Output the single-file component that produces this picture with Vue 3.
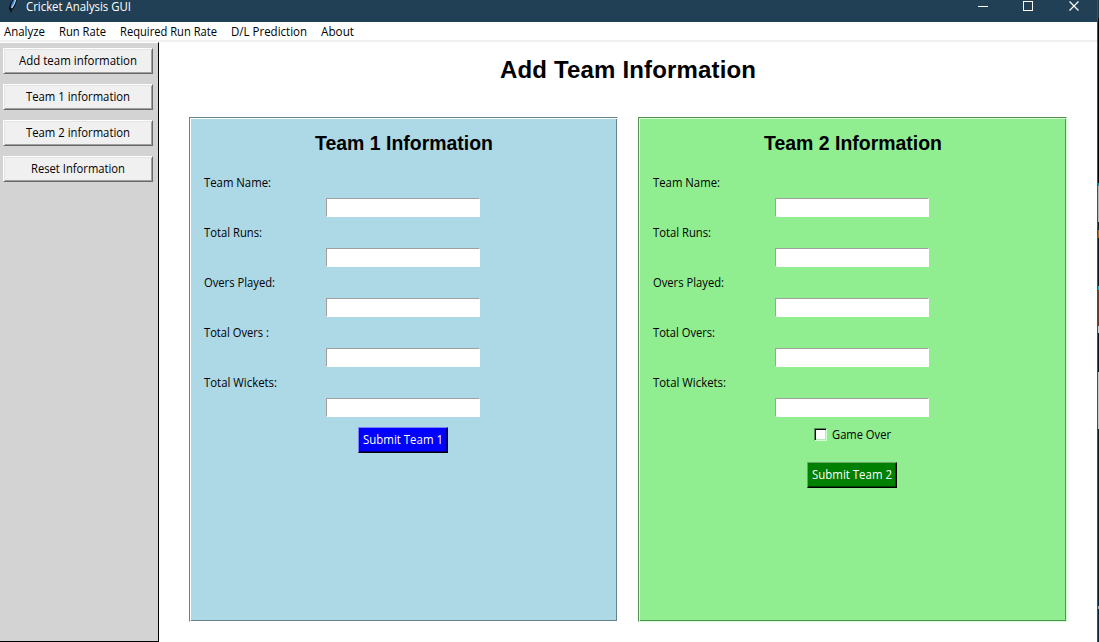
<script setup>
import { ref } from 'vue'

const menus = [
  { label: 'Analyze', width: 41 },
  { label: 'Run Rate', width: 47 },
  { label: 'Required Run Rate', width: 97 },
  { label: 'D/L Prediction', width: 76 },
  { label: 'About', width: 33 },
]
const actions = [
  { label: 'Add team information', width: 118 },
  { label: 'Team 1 information', width: 104 },
  { label: 'Team 2 information', width: 104 },
  { label: 'Reset Information', width: 94 },
]
const fieldsFor = (overs, oversWidth) => [
  { label: 'Team Name:', width: 67 },
  { label: 'Total Runs:', width: 58 },
  { label: 'Overs Played:', width: 71 },
  { label: overs, width: oversWidth },
  { label: 'Total Wickets:', width: 73 },
]
const teams = [
  { id: 1, fields: fieldsFor('Total Overs :', 65) },
  { id: 2, fields: fieldsFor('Total Overs:', 62), gameOver: true },
]
const over = ref(false)
</script>

<template>
  <div class="screen">
    <div class="window">
      <header class="titlebar">
        <svg class="feather" width="12" height="14" viewBox="0 0 12 14">
          <path d="M9.6 0 L9 4 L6.5 8.5 L4.8 9.8 L4.3 12.5 L3.3 12.5 L3.2 10 L2 9.4 L2.3 6 L4.3 2 L6 0Z" fill="#050b12" />
          <path d="M8.8 0 L8.2 3.6 L5.6 8 L4 8.8 L3.6 6.4 L5 2.8 L6.8 0Z" fill="#3c84d0" />
          <path d="M8.5 0 L7.4 3.4 L4.8 8" fill="none" stroke="#d4e8f8" stroke-width="1" />
        </svg>
        <svg class="text caption" width="105" height="15"><text x="0" y="11" textLength="105" lengthAdjust="spacingAndGlyphs">Cricket Analysis GUI</text></svg>
        <svg class="controls" width="102" height="14" viewBox="0 0 102 14" fill="none" stroke="#fff" shape-rendering="crispEdges">
          <path d="M0 6.5H10" />
          <rect x="45.5" y="1.5" width="9" height="9" />
          <path d="M91.5 1.5L100.5 10.5M100.5 1.5L91.5 10.5" stroke-width="1.2" shape-rendering="auto" />
        </svg>
      </header>
      <nav class="menubar">
        <svg v-for="m in menus" :key="m.label" class="text" :width="m.width" height="16"><text x="0" y="12" :textLength="m.width" lengthAdjust="spacingAndGlyphs">{{ m.label }}</text></svg>
      </nav>
      <div class="body">
        <aside class="sidebar">
          <button v-for="a in actions" :key="a.label" class="raised">
            <svg class="text" :width="a.width" height="16"><text x="0" y="12" :textLength="a.width" lengthAdjust="spacingAndGlyphs">{{ a.label }}</text></svg>
          </button>
        </aside>
        <main class="main">
          <svg class="heading" width="256" height="32"><text x="0" y="24" textLength="256">Add Team Information</text></svg>
          <div class="panels">
            <section v-for="t in teams" :key="t.id" class="panel" :class="'team' + t.id">
              <svg class="subheading" width="178" height="26"><text x="0" y="20" textLength="178" lengthAdjust="spacingAndGlyphs">Team {{ t.id }} Information</text></svg>
              <div v-for="f in t.fields" :key="f.label" class="field">
                <svg class="text" :width="f.width" height="16"><text x="0" y="12" :textLength="f.width" lengthAdjust="spacingAndGlyphs">{{ f.label }}</text></svg>
                <input class="entry" type="text" />
              </div>
              <label v-if="t.gameOver" class="check">
                <input v-model="over" type="checkbox" />
                <svg class="text" width="59" height="16"><text x="0" y="12" textLength="59" lengthAdjust="spacingAndGlyphs">Game Over</text></svg>
              </label>
              <button class="submit">
                <svg class="text" width="80" height="16"><text x="0" y="12" textLength="80" lengthAdjust="spacingAndGlyphs">Submit Team {{ t.id }}</text></svg>
              </button>
            </section>
          </div>
        </main>
      </div>
    </div>
    <div class="desktop-edge"></div>
  </div>
</template>

<style>
body { margin: 0; overflow: hidden; }
</style>

<style scoped>
.screen { display: flex; width: 1099px; height: 642px; overflow: hidden; background: #fff; }
.window { width: 1097px; height: 642px; display: flex; flex-direction: column; border-right: 1px solid #36536a; box-sizing: content-box; }
svg { display: block; flex: none; overflow: visible; }
.text { font: 12px "Open Sans", "Noto Sans", sans-serif; fill: #000; }
.titlebar { height: 22px; flex: none; background: #224055; display: flex; align-items: flex-start; padding-left: 7px; }
.feather { margin-right: 7px; }
.caption { fill: #fff; }
.controls { margin-left: auto; margin-right: 17px; }
.menubar { height: 18px; flex: none; display: flex; gap: 14px; padding-left: 4px; border-bottom: 2px solid #f0f0f0; }
.menubar .text { margin-top: 2px; }
.body { flex: 1; display: flex; min-height: 0; }
.sidebar { box-sizing: border-box; width: 159px; border-top: 1px solid #fff; border-right: 1px solid #000; border-bottom: 1px solid #000; background: #d3d3d3; padding: 5px 5px 0 3px; display: flex; flex-direction: column; gap: 10px; }
button { appearance: none; box-sizing: border-box; height: 26px; padding: 0; margin: 0; border-radius: 0; display: flex; justify-content: center; align-items: center; flex: none; }
.raised { width: 150px; background: #f0f0f0; border: 1px solid; border-color: #fff #696969 #696969 #fff; box-shadow: inset 1px 1px #e3e3e3, inset -1px -1px #a0a0a0; }
.main { flex: 1; display: flex; flex-direction: column; align-items: center; }
.heading { margin-top: 12px; font: bold 24px "Liberation Sans", Arial, sans-serif; }
.panels { margin-top: 31px; display: flex; gap: 20px; }
.panel { box-sizing: border-box; width: 429px; height: 505px; border: 1px solid; display: flex; flex-direction: column; align-items: center; padding-top: 12px; }
.team1 { background: #add8e6; border-color: #68828a #fff #fff #68828a; box-shadow: inset 1px 1px #fff, inset -1px -1px #68828a; }
.team2 { background: #90ee90; border-color: #568f56 #d0ffd0 #d0ffd0 #568f56; box-shadow: inset 1px 1px #d0ffd0, inset -1px -1px #568f56; }
.subheading { font: bold 20px "Liberation Sans", Arial, sans-serif; margin-bottom: 19px; }
.field { align-self: stretch; height: 50px; flex: none; display: flex; flex-direction: column; padding-left: 14px; }
.entry { appearance: none; box-sizing: border-box; width: 154px; height: 19px; margin: 7px 0 0 122px; border: 1px solid; border-color: #a0a0a0 #fff #fff #a0a0a0; border-radius: 0; padding: 0; background: #fff; outline: none; }
.submit { width: 90px; border: 1px solid #000; margin: 2px 2px 0 0; }
.team1 .submit { background: #00f; border-color: #8080ff #000 #000 #8080ff; box-shadow: inset -1px -1px #000080; }
.team2 .submit { background: #008000; border-color: #68a868 #000 #000 #68a868; box-shadow: inset -1px -1px #004000; margin-top: 19px; }
.submit .text { fill: #fff; }
.check { display: flex; height: 16px; align-items: flex-start; gap: 5px; margin-top: 2px; }
.check input { appearance: none; box-sizing: border-box; width: 13px; height: 13px; margin: 1px 0 0; border: 1px solid; border-color: #568f56 #d0ffd0 #d0ffd0 #568f56; background: #fff; box-shadow: inset 1px 1px #000, inset -1px -1px #b0eeb0; }
.desktop-edge { width: 1px; background: linear-gradient(#22343e 0 18px, #000 18px 183px, #158fa4 183px 186px, #b8b8b8 186px 222px, #172024 222px 230px, #a46724 230px 238px, #101a1f 238px 286px, #24aeba 286px 290px, #68372a 290px 326px, #ccc 326px 333px, #0d161a 333px 372px, #c8c8c8 372px 429px, #11191d 429px 600px, #06243b 600px 606px, #aaa 606px 609px, #06243b 609px 642px); }
</style>
